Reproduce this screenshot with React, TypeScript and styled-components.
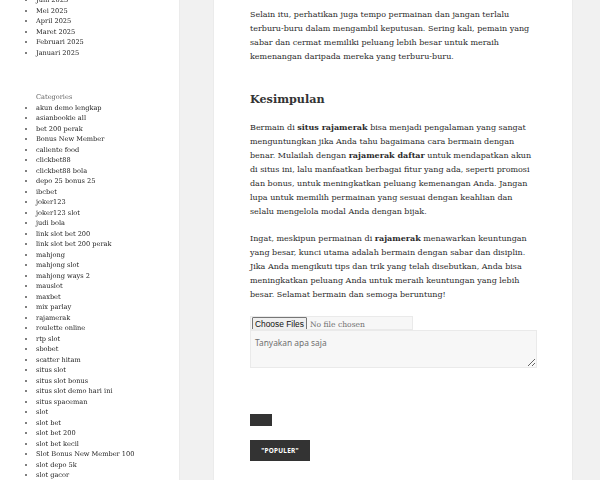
import React from "react";
import styled, { createGlobalStyle } from "styled-components";

const Global = createGlobalStyle`
  html, body {
    margin: 0;
    padding: 0;
    height: 480px;
    overflow: hidden;
    background: #f1f1f1;
  }
  body {
    font-family: "DejaVu Serif", "Liberation Serif", serif;
    color: #333;
  }
`;

const Page = styled.div`
  display: flex;
  align-items: stretch;
  min-height: 480px;
  background: #f1f1f1;
`;

const Sidebar = styled.aside`
  width: 179px;
  flex: none;
  background: #fff;
  box-shadow: 0 0 1px rgba(0, 0, 0, 0.15);
  font-size: 6.6px;
  line-height: 10.5px;
  overflow: hidden;
  filter: grayscale(1);
`;

const Widget = styled.section<{ $offset: number }>`
  margin-top: ${(p) => p.$offset}px;
`;

const WidgetTitle = styled.h2`
  margin: 0 0 0 36px;
  font-size: 6.6px;
  font-weight: normal;
  line-height: 10.5px;
  color: #666;
`;

const LinkList = styled.ul`
  margin: 0;
  padding: 0 0 0 36px;
  list-style: disc;
  li {
    color: #222;
  }
  li::marker {
    color: #555;
  }
`;

const Main = styled.main`
  flex: none;
  width: 358px;
  margin-left: 35px;
  background: #fff;
  box-shadow: 0 0 1px rgba(0, 0, 0, 0.15);
  padding: 8px 35px 0 36px;
  box-sizing: border-box;
  font-size: 8px;
  line-height: 14px;
  color: #2b2b2b;
`;

const Para = styled.p<{ $gap?: number }>`
  margin: 0 0 ${(p) => p.$gap ?? 13}px;
  strong {
    line-height: 1;
  }
`;

const Heading = styled.h2`
  margin: 26px 0 13px;
  font-size: 11.2px;
  line-height: 18px;
  font-weight: bold;
  color: #333;
`;

const FileInput = styled.input`
  display: block;
  width: 163px;
  height: 14px;
  box-sizing: border-box;
  margin: 14px 0 0;
  padding: 0;
  background: #f7f7f7;
  border: 1px solid #eaeaea;
  font-family: "DejaVu Serif", serif;
  font-size: 7.6px;
  color: #707070;
  &::file-selector-button {
    font-family: "Liberation Sans", Arial, sans-serif;
    font-size: 8.4px;
    height: 13px;
    margin: 0 3px 0 1px;
    padding: 0 2px;
    color: #111;
    background: #efefef;
    border: 1px solid #767676;
    border-radius: 1px;
  }
`;

const Question = styled.textarea`
  display: block;
  width: 287px;
  height: 38px;
  box-sizing: border-box;
  margin: 0;
  padding: 6px 4px;
  background: #f7f7f7;
  border: 1px solid #eaeaea;
  font-family: "Noto Sans", "Open Sans", sans-serif;
  font-size: 8.4px;
  line-height: 11px;
  color: #333;
  resize: vertical;
  &::placeholder {
    color: #707070;
  }
`;

const DarkButton = styled.button<{ $w: number; $h: number; $top: number }>`
  display: flex;
  align-items: center;
  justify-content: center;
  width: ${(p) => p.$w}px;
  height: ${(p) => p.$h}px;
  margin-top: ${(p) => p.$top}px;
  padding: 0;
  border: 0;
  background: #333;
  color: #fff;
  font-family: "Noto Sans", "Open Sans", sans-serif;
  font-weight: 700;
  font-size: 6.4px;
  letter-spacing: 0.04em;
  text-transform: uppercase;
`;

const archives = ["Juni 2025", "Mei 2025", "April 2025", "Maret 2025", "Februari 2025", "Januari 2025"];

const categories = [
  "akun demo lengkap",
  "asianbookie all",
  "bet 200 perak",
  "Bonus New Member",
  "caliente food",
  "clickbet88",
  "clickbet88 bola",
  "depo 25 bonus 25",
  "ibcbet",
  "joker123",
  "joker123 slot",
  "judi bola",
  "link slot bet 200",
  "link slot bet 200 perak",
  "mahjong",
  "mahjong slot",
  "mahjong ways 2",
  "mauslot",
  "maxbet",
  "mix parlay",
  "rajamerak",
  "roulette online",
  "rtp slot",
  "sbobet",
  "scatter hitam",
  "situs slot",
  "situs slot bonus",
  "situs slot demo hari ini",
  "situs spaceman",
  "slot",
  "slot bet",
  "slot bet 200",
  "slot bet kecil",
  "Slot Bonus New Member 100",
  "slot depo 5k",
  "slot gacor",
  "slot gacor hari ini",
  "slot online",
];

export default function App() {
  return (
    <>
      <Global />
      <Page>
        <Sidebar>
          <Widget $offset={-5}>
            <LinkList>
              {archives.map((a) => (
                <li key={a}>{a}</li>
              ))}
            </LinkList>
          </Widget>
          <Widget $offset={34}>
            <WidgetTitle>Categories</WidgetTitle>
            <LinkList>
              {categories.map((c) => (
                <li key={c}>{c}</li>
              ))}
            </LinkList>
          </Widget>
        </Sidebar>
        <Main>
          <Para $gap={0}>
            Selain itu, perhatikan juga tempo permainan dan jangan terlalu terburu-buru dalam mengambil
            keputusan. Sering kali, pemain yang sabar dan cermat memiliki peluang lebih besar untuk meraih
            kemenangan daripada mereka yang terburu-buru.
          </Para>
          <Heading>Kesimpulan</Heading>
          <Para>
            Bermain di <strong>situs rajamerak</strong> bisa menjadi pengalaman yang sangat menguntungkan jika
            Anda tahu bagaimana cara bermain dengan benar. Mulailah dengan <strong>rajamerak daftar</strong> untuk
            mendapatkan akun di situs ini, lalu manfaatkan berbagai fitur yang ada, seperti promosi dan bonus,
            untuk meningkatkan peluang kemenangan Anda. Jangan lupa untuk memilih permainan yang sesuai dengan
            keahlian dan selalu mengelola modal Anda dengan bijak.
          </Para>
          <Para $gap={0}>
            Ingat, meskipun permainan di <strong>rajamerak</strong> menawarkan keuntungan yang besar, kunci utama
            adalah bermain dengan sabar dan disiplin. Jika Anda mengikuti tips dan trik yang telah disebutkan, Anda
            bisa meningkatkan peluang Anda untuk meraih keuntungan yang lebih besar. Selamat bermain dan semoga
            beruntung!
          </Para>
          <FileInput type="file" multiple />
          <Question placeholder="Tanyakan apa saja" />
          <DarkButton $w={22} $h={12} $top={46} aria-label="Kirim" />
          <DarkButton $w={60} $h={21} $top={14}>
            "Populer"
          </DarkButton>
        </Main>
      </Page>
    </>
  );
}
